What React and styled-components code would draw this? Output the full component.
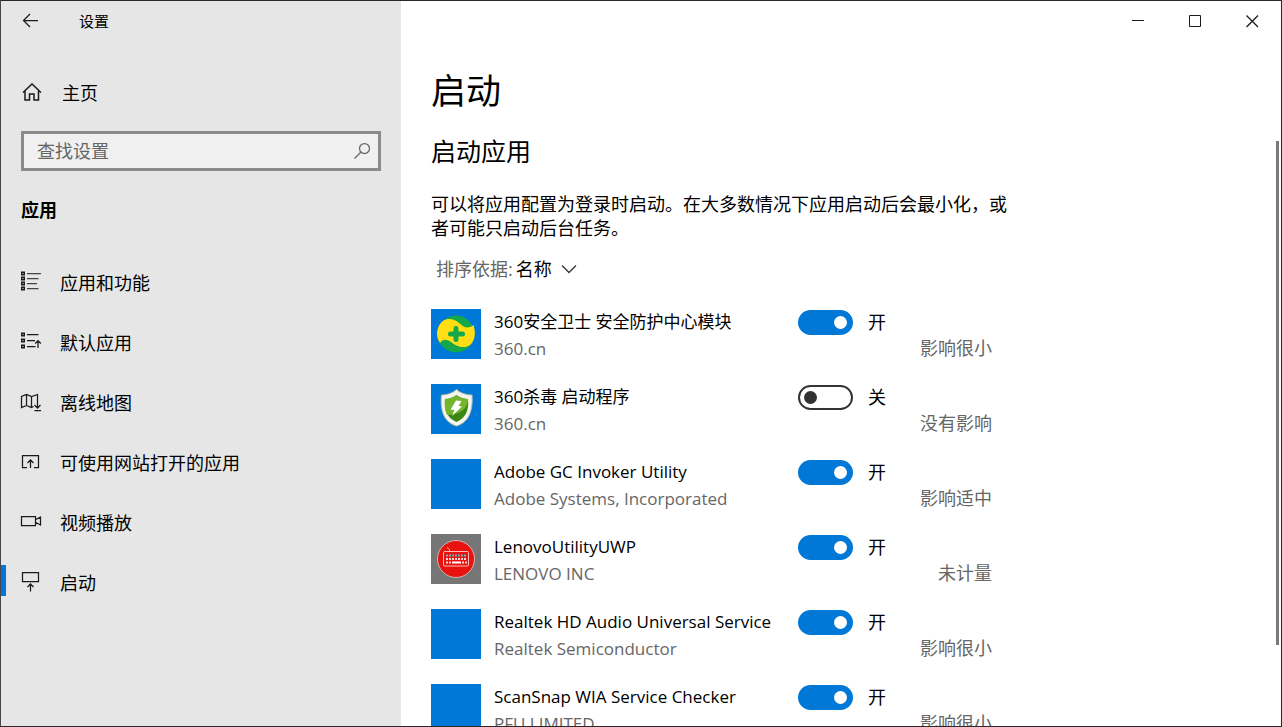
import { useState } from "react";
import styled, { createGlobalStyle } from "styled-components";

const GlobalStyle = createGlobalStyle`
  * {
    box-sizing: border-box;
  }
  body {
    margin: 0;
    overflow: hidden;
    font-family: "Open Sans", "Noto Sans CJK SC", sans-serif;
    color: #000000;
  }
  button, input, select {
    font-family: inherit;
    color: inherit;
  }
`;

const Window = styled.div`
  height: 100vh;
  display: flex;
  overflow: hidden;
  border: 1px solid #2b2829;
  border-left-color: #4a4548;
  background-color: #ffffff;
  font-size: 18px;
`;

const Sidebar = styled.aside`
  width: 400px;
  flex-shrink: 0;
  background-color: #e6e6e6;
`;

const SideBar = styled.div`
  height: 40px;
  display: flex;
  align-items: center;
  gap: 30px;
  padding-left: 10px;
  font-size: 15px;
  line-height: 20px;
`;

const IconButton = styled.button`
  width: ${(props) => props.$width}px;
  height: 40px;
  display: flex;
  align-items: center;
  justify-content: center;
  padding: 0;
  border: none;
  background: none;
`;

const NavLink = styled.a`
  height: 60px;
  display: flex;
  align-items: center;
  gap: 18px;
  padding-left: ${(props) => (props.$active ? "14px" : "19px")};
  border-left: ${(props) => (props.$active ? "5px solid transparent" : "none")};
  border-image: ${(props) =>
    props.$active
      ? "linear-gradient(transparent 14px, #0078d7 14px, #0078d7 44px, transparent 44px) 1"
      : "none"};
  color: #000000;
  text-decoration: none;
`;

const HomeLink = styled(NavLink)`
  margin-top: 21px;
  gap: 20px;
`;

const Search = styled.label`
  height: 40px;
  display: flex;
  align-items: center;
  margin: 9px 20px 0;
  padding: 0 7px 0 13px;
  border: 3px solid #8b8b8b;
  background-color: #f0f0f0;
`;

const SearchInput = styled.input`
  flex: 1;
  min-width: 0;
  padding: 0;
  border: none;
  outline: none;
  background: none;
  font-size: 18px;
  &::placeholder {
    color: #666666;
    opacity: 1;
  }
`;

const Category = styled.h2`
  margin: 26px 20px 28px;
  font-size: 18px;
  line-height: 27px;
`;

const Main = styled.main`
  flex: 1;
  min-width: 0;
  display: flex;
  flex-direction: column;
`;

const WindowButtons = styled.div`
  display: flex;
  justify-content: flex-end;
`;

const Scroller = styled.div`
  flex: 1;
  min-height: 0;
  display: flex;
  justify-content: space-between;
  padding-right: 2px;
`;

const Content = styled.div`
  width: 576px;
  min-height: 0;
  margin-left: 30px;
`;

const Thumb = styled.div`
  width: 3px;
  height: 504px;
  margin-top: 100px;
  background-color: #7a7a7a;
`;

const Title = styled.h1`
  margin: 24px 0 0;
  font-size: 35px;
  font-weight: 400;
  line-height: 52px;
`;

const Subtitle = styled.h2`
  margin: 15px 0 0;
  font-size: 25px;
  font-weight: 400;
  line-height: 38px;
`;

const Desc = styled.p`
  margin: 22px 0 0;
  line-height: 24px;
`;

const Sort = styled.label`
  display: flex;
  align-items: center;
  margin: 15px 0 0 5px;
  line-height: 28px;
  color: #666666;
`;

const SortSelect = styled.select`
  margin: 0 8px 0 3px;
  padding: 0;
  border: none;
  background: none;
  appearance: none;
  font-size: 18px;
  color: #000000;
`;

const List = styled.ul`
  width: 561px;
  margin: 26px 0 0;
  padding: 0;
  list-style: none;
`;

const Item = styled.li`
  height: 50px;
  display: grid;
  grid-template-columns: 50px 291px 1fr auto;
  column-gap: 13px;
  margin-bottom: 25px;
`;

const Tile = styled.div`
  height: 50px;
  background-color: ${(props) => props.$color};
`;

const Info = styled.div`
  display: flex;
  flex-direction: column;
  gap: 2px;
  font-size: 17px;
  line-height: 25px;
  white-space: nowrap;
`;

const Publisher = styled.span`
  color: #666666;
`;

const Impact = styled.span`
  align-self: end;
  line-height: 26px;
  color: #666666;
`;

const Toggle = styled.label`
  display: flex;
  align-items: center;
  align-self: start;
  gap: 15px;
  line-height: 27px;
`;

const Switch = styled.input`
  width: 55px;
  height: 25px;
  display: flex;
  align-items: center;
  margin: 0;
  padding: 0 4px;
  appearance: none;
  border: 2px solid #333333;
  border-radius: 13px;
  background-color: #ffffff;
  &::before {
    content: "";
    width: 13px;
    height: 13px;
    border-radius: 50%;
    background-color: #333333;
  }
  &:checked {
    justify-content: flex-end;
    border-color: #0078d7;
    background-color: #0078d7;
  }
  &:checked::before {
    background-color: #ffffff;
  }
`;

const Glyph = ({ size = 22, color = "#1a1a1a", children }) => (
  <svg
    width={size}
    height={size}
    viewBox={`0 0 ${size} ${size}`}
    fill="none"
    stroke={color}
    strokeWidth="1.25"
    aria-hidden="true"
  >
    {children}
  </svg>
);

const BackIcon = () => (
  <Glyph size={16}>
    <path d="M16 7.500H1.500M8 1L1.500 7.500L8 14" />
  </Glyph>
);

const HomeIcon = () => (
  <Glyph>
    <path strokeWidth="1.5" d="M3 11.500L12 3L21 11.500M5 10V19H9.500V13H14V19H18.500V10" />
  </Glyph>
);

const SearchIcon = () => (
  <Glyph size={18} color="#666666">
    <circle cx="11.500" cy="6.500" r="5" />
    <path d="M8 10L1.500 16.500" />
  </Glyph>
);

const AppsIcon = () => (
  <Glyph>
    <path stroke="#444444" d="M7 2.500H21M7 7.500H18.500M7 12.500H17M7 17.500H18.500" />
    <path
      strokeWidth="1.500"
      d="M1.750 1.250h2.500v2.500h-2.500zM1.750 6.250h2.500v2.500h-2.500zM1.750 11.250h2.500v2.500h-2.500zM1.750 16.250h2.500v2.500h-2.500z"
    />
  </Glyph>
);

const DefaultsIcon = () => (
  <Glyph>
    <path d="M7 3.500H18.500M7 9.500H15M7 15.500H15.500M18 17V9.500M15.200 12.500L18 9.700L20.800 12.500" />
    <path
      strokeWidth="1.500"
      d="M1.750 2.250h2.500v2.500h-2.500zM1.750 8.250h2.500v2.500h-2.500zM1.750 14.250h2.500v2.500h-2.500z"
    />
  </Glyph>
);

const MapIcon = () => (
  <Glyph>
    <path d="M13.500 15.500L11.500 16.500L6.500 14.500L1.500 16.500V5.500L6.500 3.500L11.500 5.500L17.500 3.500V16M6.500 3.500V14.500M11.500 5.500V16.500M14.500 14L17.500 17L20.500 14M14.500 19.500H21" />
  </Glyph>
);

const WebAppsIcon = () => (
  <Glyph>
    <path d="M7 16.500H2.500V4.500H18.500V16.500H14M10.500 17V9M7.500 12L10.500 9L13.500 12" />
  </Glyph>
);

const VideoIcon = () => (
  <Glyph>
    <path d="M1.500 5.500H15.500V14.500H1.500zM15.500 8.800L20.500 6V14L15.500 11.200" />
  </Glyph>
);

const StartupIcon = () => (
  <Glyph>
    <path d="M2.500 1.500H18.500V10.500H2.500zM10.500 20.500V13M7.500 16L10.500 13L13.500 16" />
  </Glyph>
);

const ChevronIcon = () => (
  <Glyph size={18} color="#333333">
    <path d="M2 5.500L9 12.500L16 5.500" />
  </Glyph>
);

const GuardLogo = () => (
  <svg viewBox="0 0 50 50" aria-hidden="true">
    <circle cx="25" cy="25" r="18.500" fill="#14a84b" />
    <path
      fill="#ffdf13"
      d="M6 24C7 15 12 10 18 10C27 10 30 18 36 18.500C39 18.500 41 17.500 42.500 16C45 24 44 32 39 36C31 41 24 36 20 33C15 30 12 30 9 34C7 31 6 28 6 24z"
    />
    <path fill="none" stroke="#14a84b" strokeWidth="5" strokeLinecap="round" d="M25 19.500V30.500M19.500 25H31.500" />
  </svg>
);

const ShieldLogo = () => (
  <svg viewBox="0 0 50 50" aria-hidden="true">
    <path
      fill="#f3f5ee"
      stroke="#b5bda9"
      d="M25.500 5.500C29 9 35 11 41 11C42 25 39 38 25.500 42C12 38 9 25 10.500 11C16 11 22 9 25.500 5.500z"
    />
    <path fill="#3c8713" d="M25.500 11C29 13.500 33 15 37 15C38 26 35 34 25.500 38C16 34 13 26 14 15C18 15 22 13.500 25.500 11z" />
    <path fill="#74b52d" d="M25.500 11C29 13.500 33 15 37 15C37 23 32 30 16 31C13.500 26 13.500 20 14 15C18 15 22 13.500 25.500 11z" />
    <path fill="#ffffff" d="M25 16.500L30.500 17L27.500 22L31 22.500L21 32L23.500 26L19.500 25.500z" />
  </svg>
);

const KeyboardLogo = () => (
  <svg viewBox="0 0 50 50" aria-hidden="true">
    <circle cx="25" cy="25" r="18.500" fill="#e8130f" stroke="#d2b5b3" />
    <path fill="none" stroke="#ffb9b5" d="M18.500 17V15.500L16 13.500M14 17.500H36.500Q37.500 17.500 37.500 18.500V31Q37.500 32 36.500 32H14Q12.500 32 12.500 31V18.500Q12.500 17.500 14 17.500z" />
    <path fill="none" stroke="#69b4be" strokeWidth="2" strokeDasharray="2 1" d="M15 21.500H36" />
    <path fill="none" stroke="#ffd7d4" strokeWidth="2" strokeDasharray="2 1" d="M15 25H36M15 28.500H20M31 28.500H36" />
    <path stroke="#ffffff" strokeWidth="2" d="M21 28.500H30" />
  </svg>
);

const navItems = [
  { label: "应用和功能", Icon: AppsIcon },
  { label: "默认应用", Icon: DefaultsIcon },
  { label: "离线地图", Icon: MapIcon },
  { label: "可使用网站打开的应用", Icon: WebAppsIcon },
  { label: "视频播放", Icon: VideoIcon },
  { label: "启动", Icon: StartupIcon, active: true },
];

const apps = [
  { name: "360安全卫士 安全防护中心模块", publisher: "360.cn", impact: "影响很小", on: true, Logo: GuardLogo },
  { name: "360杀毒 启动程序", publisher: "360.cn", impact: "没有影响", on: false, Logo: ShieldLogo },
  { name: "Adobe GC Invoker Utility", publisher: "Adobe Systems, Incorporated", impact: "影响适中", on: true },
  { name: "LenovoUtilityUWP", publisher: "LENOVO INC", impact: "未计量", on: true, Logo: KeyboardLogo, color: "#767676" },
  { name: "Realtek HD Audio Universal Service", publisher: "Realtek Semiconductor", impact: "影响很小", on: true },
  { name: "ScanSnap WIA Service Checker", publisher: "PFU LIMITED", impact: "影响很小", on: true },
];

const StartupApp = ({ app }) => {
  const [on, setOn] = useState(app.on);
  const { Logo } = app;
  return (
    <Item>
      <Tile $color={app.color || "#0078d7"}>{Logo && <Logo />}</Tile>
      <Info>
        <span>{app.name}</span>
        <Publisher>{app.publisher}</Publisher>
      </Info>
      <Toggle>
        <Switch type="checkbox" role="switch" checked={on} onChange={() => setOn(!on)} />
        {on ? "开" : "关"}
      </Toggle>
      <Impact>{app.impact}</Impact>
    </Item>
  );
};

const App = () => {
  return (
    <Window>
      <GlobalStyle />
      <Sidebar>
        <SideBar>
          <IconButton $width={38}>
            <BackIcon />
          </IconButton>
          设置
        </SideBar>
        <HomeLink href="#">
          <HomeIcon />
          主页
        </HomeLink>
        <Search>
          <SearchInput type="text" placeholder="查找设置" />
          <SearchIcon />
        </Search>
        <Category>应用</Category>
        <nav>
          {navItems.map(({ label, Icon, active }) => (
            <NavLink key={label} href="#" $active={active}>
              <Icon />
              {label}
            </NavLink>
          ))}
        </nav>
      </Sidebar>
      <Main>
        <WindowButtons>
          <IconButton $width={57}>
            <Glyph size={13}>
              <path strokeWidth="1" d="M0 5.500H12" />
            </Glyph>
          </IconButton>
          <IconButton $width={57}>
            <Glyph size={13}>
              <path strokeWidth="1" d="M0.500 0.500H11.500V11.500H0.500z" />
            </Glyph>
          </IconButton>
          <IconButton $width={57}>
            <Glyph size={13}>
              <path d="M0.500 0.500L12 12M12 0.500L0.500 12" />
            </Glyph>
          </IconButton>
        </WindowButtons>
        <Scroller>
          <Content>
            <Title>启动</Title>
            <Subtitle>启动应用</Subtitle>
            <Desc>
              可以将应用配置为登录时启动。在大多数情况下应用启动后会最小化，或者可能只启动后台任务。
            </Desc>
            <Sort>
              排序依据:
              <SortSelect defaultValue="name">
                <option value="name">名称</option>
              </SortSelect>
              <ChevronIcon />
            </Sort>
            <List>
              {apps.map((app) => (
                <StartupApp key={app.name} app={app} />
              ))}
            </List>
          </Content>
          <Thumb />
        </Scroller>
      </Main>
    </Window>
  );
};

export default App;
